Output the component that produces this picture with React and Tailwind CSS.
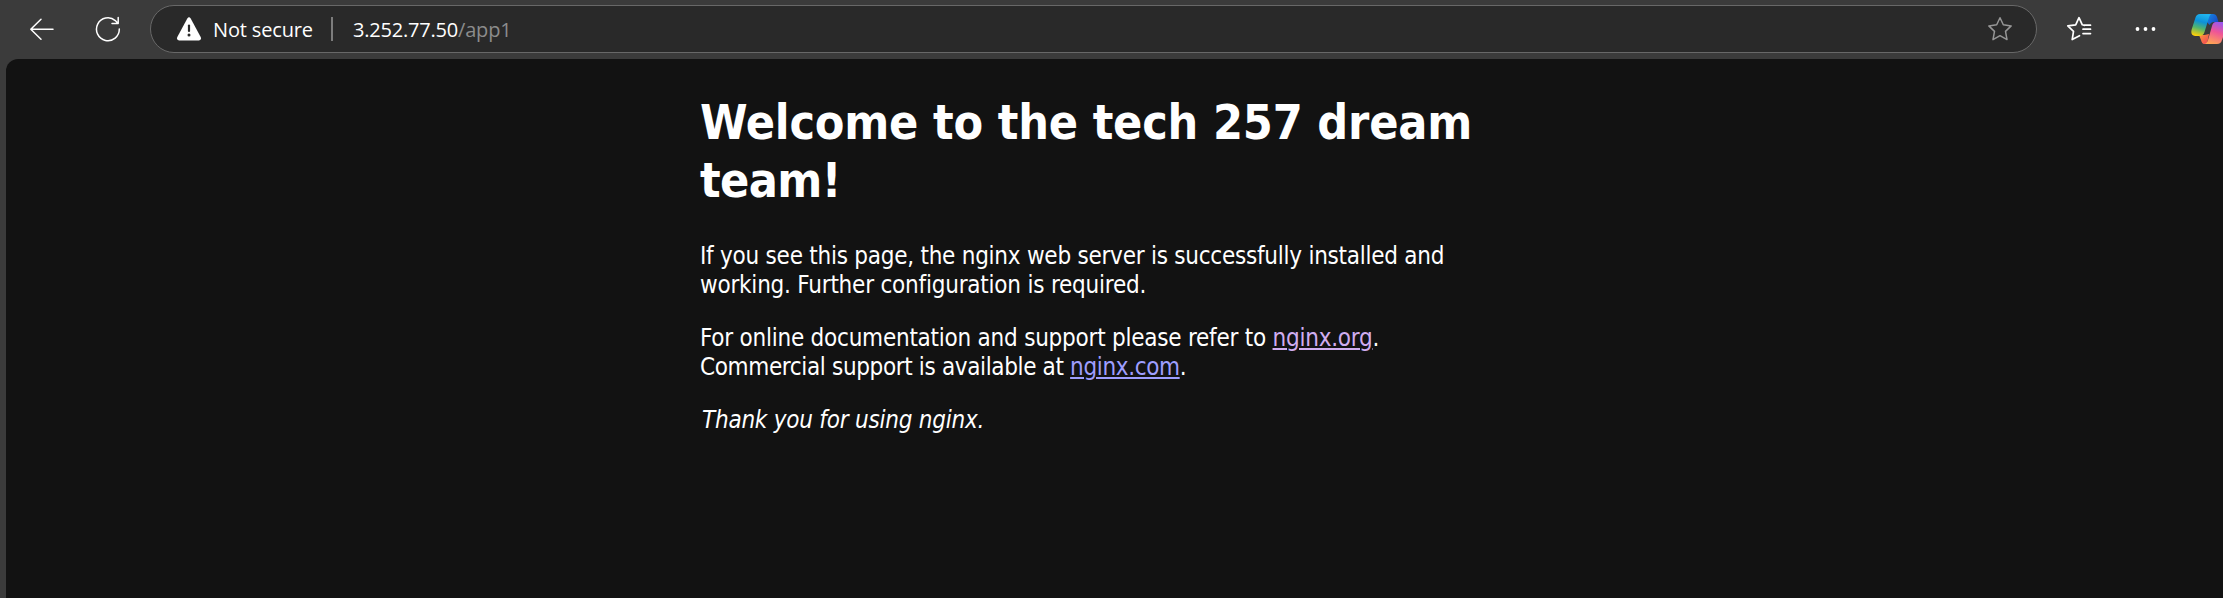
import React from "react";

const stroke = { fill: "none", strokeLinecap: "round", strokeLinejoin: "round" };

function BackIcon() {
  return (
    <svg className="ml-[29px] shrink-0" width="26" height="24" viewBox="0 0 26 24" stroke="#fff" strokeWidth="1.5" {...stroke}>
      <path d="M24 12.3H1.8M12 2.3L1.8 12.3L12 22.2" />
    </svg>
  );
}

function ReloadIcon() {
  return (
    <svg className="ml-[40px] shrink-0" width="26" height="26" viewBox="0 0 26 26" stroke="#fff" strokeWidth="1.5" {...stroke}>
      <path d="M24.3 13A11.4 11.4 0 1 1 20.3 4.6L23 7.4M23.2 1.6V7.6H17" />
    </svg>
  );
}

function WarningIcon() {
  return (
    <svg className="ml-[25px] shrink-0" width="26" height="24" viewBox="0 0 26 24">
      <path d="M11.3 1.5Q13 -.8 14.7 1.5L24.8 20.3Q25.6 23.2 23 23.4H3Q.4 23.2 1.2 20.3Z" fill="#fff" />
      <path d="M13 8.6V14" stroke="#292929" strokeWidth="2.2" strokeLinecap="round" />
      <circle cx="13" cy="18" r="1.5" fill="#292929" />
    </svg>
  );
}

function StarIcon() {
  return (
    <svg className="ml-auto mr-[23px] shrink-0" width="26" height="26" viewBox="0 0 26 26" stroke="#959595" strokeWidth="1.5" {...stroke}>
      <path d="M13 1.7L16.3 8.8L24.2 9.9L18.5 15.4L20 23.6L13 19.7L6 23.6L7.5 15.4L1.8 9.9L9.7 8.8Z" />
    </svg>
  );
}

function FavoritesIcon() {
  return (
    <svg className="ml-[29px] shrink-0" width="26" height="26" viewBox="0 0 26 26" stroke="#fff" strokeWidth="1.7" {...stroke}>
      <path d="M13.5 19.7L6.2 23.6L7.5 15.4L1.8 9.9L9.7 8.8L13 1.7L16.3 8.8L18.5 9.4M17 13.2H24.5M17 17.6H24.5M18.5 9.2H24.5" />
    </svg>
  );
}

function CopilotIcon() {
  return (
    <svg className="ml-[34px] shrink-0" width="34" height="32" viewBox="0 0 34 32">
      <defs>
        <linearGradient id="cool" x1="0.6" y1="0" x2="0.35" y2="1">
          <stop offset="0" stopColor="#20b4ef" />
          <stop offset=".35" stopColor="#0d91d8" />
          <stop offset=".65" stopColor="#52b56d" />
          <stop offset="1" stopColor="#fbd00b" />
        </linearGradient>
        <linearGradient id="fold" x1="0" y1="0" x2="1" y2="0.7">
          <stop offset="0" stopColor="#168be5" />
          <stop offset="1" stopColor="#1748c4" />
        </linearGradient>
        <linearGradient id="warm" x1="0.7" y1="0" x2="0.35" y2="1">
          <stop offset="0" stopColor="#9857ef" />
          <stop offset=".45" stopColor="#ef5597" />
          <stop offset="1" stopColor="#ffa455" />
        </linearGradient>
        <linearGradient id="ember" x1="0" y1="0" x2="1" y2="1">
          <stop offset="0" stopColor="#ff9a3d" />
          <stop offset="1" stopColor="#ee4056" />
        </linearGradient>
      </defs>
      <path d="M16 1H22Q25 1 26 4L27.5 9H23Q20 9 18.500 12L16 9Z" fill="url(#fold)" />
      <path d="M8 22H13.500L18 21L16 31H13Q11 31 10 27Z" fill="url(#ember)" />
      <path d="M9 1H20Q18.500 2 17.500 6L13.500 19Q12.500 23 8 23H4Q-1 22.500 .8 16L4.500 4.500Q5.500 1 9 1Z" fill="url(#cool)" />
      <path d="M25 9H31Q36 9 35 15L31 27Q30 31 26 31H13.500Q16 30.500 17 27L21 13Q22 9 25 9Z" fill="url(#warm)" />
    </svg>
  );
}

function Toolbar() {
  return (
    <header className="flex h-[59px] items-center overflow-hidden pb-[1px] font-['Open_Sans','Noto_Sans',sans-serif] text-[20px]">
      <BackIcon />
      <ReloadIcon />
      <div className="ml-[29px] flex h-12 w-[1887px] shrink-0 items-center rounded-full border-[1.5px] border-[#686868] bg-[#292929]">
        <WarningIcon />
        <span className="ml-[11px] mt-[1px] w-[101px] whitespace-nowrap tracking-[-0.15px] text-white">Not secure</span>
        <span className="ml-[17px] h-6 w-[2px] shrink-0 bg-[#7c7c7c]" />
        <span className="ml-[20px] mt-[1px] whitespace-nowrap tracking-[-0.2px] text-white">
          3.252.77.50<span className="text-[#8c8c8c]">/app1</span>
        </span>
        <StarIcon />
      </div>
      <FavoritesIcon />
      <svg className="ml-[43px] shrink-0" width="22" height="6" viewBox="0 0 22 6" fill="#fff">
        <circle cx="2.500" cy="3" r="1.900" />
        <circle cx="10.500" cy="3" r="1.900" />
        <circle cx="18.500" cy="3" r="1.900" />
      </svg>
      <CopilotIcon />
    </header>
  );
}

export default function App() {
  return (
    <div className="flex h-[598px] w-[2223px] flex-col overflow-hidden bg-[#3b3b3b]">
      <Toolbar />
      <main className="ml-[6px] flex-1 rounded-tl-[12px] bg-[#121212] pl-[694px] pt-[34px] font-['DejaVu_Sans_Condensed','DejaVu_Sans',sans-serif] text-[24px] leading-[29px] text-white">
        <h1 className="whitespace-nowrap text-[48px] font-bold leading-[58px]">
          <span className="block tracking-[-0.2px]">Welcome to the tech 257 dream</span>
          <span className="block tracking-[-0.6px]">team!</span>
        </h1>
        <p className="mt-[33px] whitespace-nowrap">
          <span className="block tracking-[-0.25px]">If you see this page, the nginx web server is successfully installed and</span>
          <span className="block tracking-[-0.22px]">working. Further configuration is required.</span>
        </p>
        <p className="mt-[24px] whitespace-nowrap">
          <span className="block tracking-[-0.24px]">
            For online documentation and support please refer to{" "}
            <a className="text-[#d0adf0] underline decoration-2 underline-offset-[2px]">nginx.org</a>.
          </span>
          <span className="block tracking-[-0.36px]">
            Commercial support is available at{" "}
            <a className="text-[#9e9eff] underline decoration-2 underline-offset-[2px]">nginx.com</a>.
          </span>
        </p>
        <p className="mt-[24px] whitespace-nowrap pl-[2px] italic tracking-[-0.23px]">Thank you for using nginx.</p>
      </main>
    </div>
  );
}
